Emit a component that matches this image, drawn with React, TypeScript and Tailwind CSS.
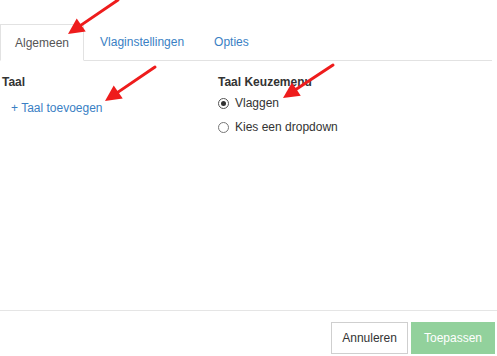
import React from "react";

function Arrow({ x1, y1, x2, y2 }: { x1: number; y1: number; x2: number; y2: number }) {
  const dx = x2 - x1;
  const dy = y2 - y1;
  const len = Math.sqrt(dx * dx + dy * dy);
  const ux = dx / len;
  const uy = dy / len;
  const headLen = 16;
  const headW = 8;
  const bx = x2 - ux * headLen;
  const by = y2 - uy * headLen;
  const px = -uy;
  const py = ux;
  const pts = `${x2},${y2} ${bx + px * headW},${by + py * headW} ${bx - px * headW},${by - py * headW}`;
  return (
    <g>
      <line x1={x1} y1={y1} x2={bx + ux * 2} y2={by + uy * 2} stroke="#ee1c1c" strokeWidth={3} strokeLinecap="round" />
      <polygon points={pts} fill="#ee1c1c" />
    </g>
  );
}

export default function App() {
  return (
    <div
      className="relative w-[497px] h-[356px] bg-white overflow-hidden text-[12px] text-[#333]"
      style={{ fontFamily: '"Liberation Sans", Arial, sans-serif' }}
    >
      <div className="flex flex-col h-full">
        <div className="pt-[24px] pr-[5px]">
          <div className="flex border-b border-[#e2e2e2] h-[37px]">
            <div className="h-[37px] px-[14px] flex items-center border border-[#e2e2e2] border-b-white bg-white text-[#555] -mb-px">
              Algemeen
            </div>
            <div className="h-[36px] pl-[16px] pr-[15px] flex items-center text-[#3a7fc4]">Vlaginstellingen</div>
            <div className="h-[36px] px-[15px] flex items-center text-[#3a7fc4]">Opties</div>
          </div>
        </div>
        <div className="flex flex-1 pt-[12px]">
          <div className="w-[218px] pl-[2px]">
            <div className="font-bold leading-[18px]">Taal</div>
            <div className="mt-[8px] pl-[9px] text-[#3a7fc4] leading-[18px]">+ Taal toevoegen</div>
          </div>
          <div className="flex-1">
            <div className="font-bold leading-[18px]">Taal Keuzemenu</div>
            <div className="mt-[3px] flex items-center gap-[6px] leading-[18px]">
              <span className="w-[11px] h-[11px] rounded-full border border-[#555] flex items-center justify-center">
                <span className="w-[5px] h-[5px] rounded-full bg-[#333]" />
              </span>
              <span>Vlaggen</span>
            </div>
            <div className="mt-[6px] flex items-center gap-[6px] leading-[18px]">
              <span className="w-[11px] h-[11px] rounded-full border border-[#777]" />
              <span>Kies een dropdown</span>
            </div>
          </div>
        </div>
        <div className="border-t border-[#e5e5e5] h-[46px] flex items-start justify-end gap-[3px] pt-[11px] pr-[2px]">
          <div className="h-[32px] px-[10px] flex items-center border border-[#cfcfcf] bg-white text-[#333]">
            Annuleren
          </div>
          <div className="h-[32px] px-[12px] flex items-center bg-[#92d19c] text-white border border-[#92d19c]">
            Toepassen
          </div>
        </div>
      </div>
      <svg className="absolute inset-0 pointer-events-none" width={497} height={356}>
        <Arrow x1={118} y1={0} x2={68} y2={34} />
        <Arrow x1={155} y1={67} x2={105} y2={101} />
        <Arrow x1={333} y1={65} x2={283} y2={98} />
      </svg>
    </div>
  );
}
